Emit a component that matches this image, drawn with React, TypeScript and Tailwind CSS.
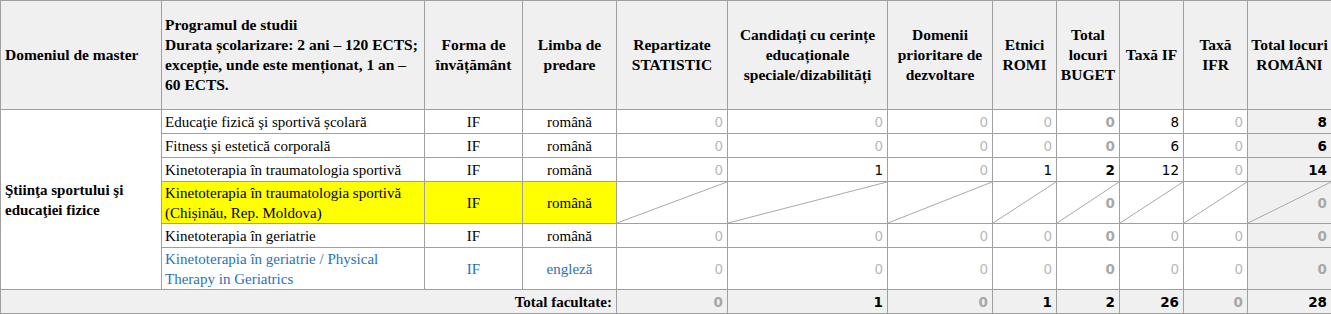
const serif = "font-['Liberation_Serif','Times_New_Roman',serif]";
const num = "font-['DejaVu_Sans','Verdana',sans-serif] text-[13.5px] text-right pr-[4px]";
const cellB = "border border-[#a0a0a0]";

type Row = {
  name: string;
  blue?: boolean;
  tall?: boolean;
  vals: number[]; // repartizate, cerinte, domenii, romi, buget, taxa IF, taxa IFR, total
};

const ROWS: Row[] = [
  { name: "Educaţie fizică şi sportivă școlară", vals: [0, 0, 0, 0, 0, 8, 0, 8] },
  { name: "Fitness şi estetică corporală", vals: [0, 0, 0, 0, 0, 6, 0, 6] },
  { name: "Kinetoterapia în traumatologia sportivă", vals: [0, 1, 0, 1, 2, 12, 0, 14] },
  { name: "Kinetoterapia în geriatrie", vals: [0, 0, 0, 0, 0, 0, 0, 0] },
  { name: "Kinetoterapia în geriatrie / Physical Therapy in Geriatrics", blue: true, tall: true, vals: [0, 0, 0, 0, 0, 0, 0, 0] },
];

const TOTALS = [0, 1, 0, 1, 2, 26, 0, 28];

const HEADS = [
  ["Forma de", "învățământ"],
  ["Limba de", "predare"],
  ["Repartizate", "STATISTIC"],
  ["Candidați cu cerințe", "educaționale", "speciale/dizabilități"],
  ["Domenii", "prioritare de", "dezvoltare"],
  ["Etnici", "ROMI"],
  ["Total", "locuri", "BUGET"],
  ["Taxă IF"],
  ["Taxă", "IFR"],
  ["Total locuri", "ROMÂNI"],
];

// columns 4 (BUGET) and 7 (ROMÂNI) of the numeric block are bold
const isBold = (i: number) => i === 4 || i === 7;

function Num({ v, bold, shade }: { v: number; bold?: boolean; shade?: boolean }) {
  const color = v === 0 ? (bold ? "text-[#a8a8a8]" : "text-[#b8b8b8]") : "text-black";
  return (
    <td className={`${cellB} ${num} ${bold ? "font-bold" : ""} ${color} ${shade ? "bg-[#f0f0f0]" : ""}`}>{v}</td>
  );
}

function Slash({ children, shade }: { children?: React.ReactNode; shade?: boolean }) {
  return (
    <td className={`${cellB} ${num} font-bold text-[#a8a8a8] relative ${shade ? "bg-[#f0f0f0]" : ""}`}>
      <svg className="absolute inset-0 w-full h-full" viewBox="0 0 100 100" preserveAspectRatio="none">
        <line x1="0" y1="100" x2="100" y2="0" stroke="#a8a8a8" strokeWidth="1" vectorEffect="non-scaling-stroke" />
      </svg>
      {children}
    </td>
  );
}

export default function App() {
  return (
    <div className="bg-white w-[1331px] h-[314px]">
      <table className={`border-collapse table-fixed w-[1331px] ${serif} text-[15px] leading-[20px] text-black`}>
        <colgroup>
          {[161, 263, 98, 94, 111, 160, 105, 64, 63, 64, 64, 84].map((w, i) => (
            <col key={i} style={{ width: w }} />
          ))}
        </colgroup>
        <thead>
          <tr className="h-[109px] bg-[#f0f0f0] text-[15.5px]">
            <th className={`${cellB} text-left font-bold pl-[4px] align-middle`}>Domeniul de master</th>
            <th className={`${cellB} text-left font-bold pl-[3px] align-middle whitespace-nowrap`}>
              Programul de studii<br />Durata școlarizare: 2 ani – 120 ECTS;<br />excepție, unde este menționat, 1 an –<br />60 ECTS.
            </th>
            {HEADS.map((lines, i) => (
              <th key={i} className={`${cellB} text-center font-bold align-middle whitespace-nowrap`}>
                {lines.map((l, j) => (
                  <span key={j}>
                    {j > 0 && <br />}
                    {l}
                  </span>
                ))}
              </th>
            ))}
          </tr>
        </thead>
        <tbody>
          {ROWS.slice(0, 3).map((r, ri) => (
            <tr key={r.name} className="h-[24px]">
              {ri === 0 && (
                <td rowSpan={6} className={`${cellB} font-bold pl-[4px] align-middle`}>
                  Ştiinţa sportului şi<br />educaţiei fizice
                </td>
              )}
              <td className={`${cellB} pl-[3px] whitespace-nowrap`}>{r.name}</td>
              <td className={`${cellB} text-center`}>IF</td>
              <td className={`${cellB} text-center`}>română</td>
              {r.vals.map((v, i) => (
                <Num key={i} v={v} bold={isBold(i)} shade={i === 7} />
              ))}
            </tr>
          ))}
          <tr className="h-[42px]">
            <td className={`${cellB} pl-[3px] bg-[#ffff00]`}>
              Kinetoterapia în traumatologia sportivă<br />(Chișinău, Rep. Moldova)
            </td>
            <td className={`${cellB} text-center bg-[#ffff00]`}>IF</td>
            <td className={`${cellB} text-center bg-[#ffff00]`}>română</td>
            <Slash />
            <Slash />
            <Slash />
            <Slash />
            <Slash>0</Slash>
            <Slash />
            <Slash />
            <Slash shade>0</Slash>
          </tr>
          {ROWS.slice(3).map((r) => (
            <tr key={r.name} className={r.tall ? "h-[42px]" : "h-[24px]"}>
              <td className={`${cellB} pl-[3px] ${r.blue ? "text-[#2a72b5]" : ""}`}>
                {r.blue ? (
                  <>
                    Kinetoterapia în geriatrie / Physical<br />Therapy in Geriatrics
                  </>
                ) : (
                  r.name
                )}
              </td>
              <td className={`${cellB} text-center ${r.blue ? "text-[#2a72b5]" : ""}`}>IF</td>
              <td className={`${cellB} text-center ${r.blue ? "text-[#2a72b5]" : ""}`}>{r.blue ? "engleză" : "română"}</td>
              {r.vals.map((v, i) => (
                <Num key={i} v={v} bold={isBold(i)} shade={i === 7} />
              ))}
            </tr>
          ))}
          <tr className="h-[24px] bg-[#f0f0f0]">
            <td colSpan={4} className={`${cellB} text-right font-bold pr-[4px]`}>Total facultate:</td>
            {TOTALS.map((v, i) => (
              <Num key={i} v={v} bold />
            ))}
          </tr>
        </tbody>
      </table>
    </div>
  );
}
